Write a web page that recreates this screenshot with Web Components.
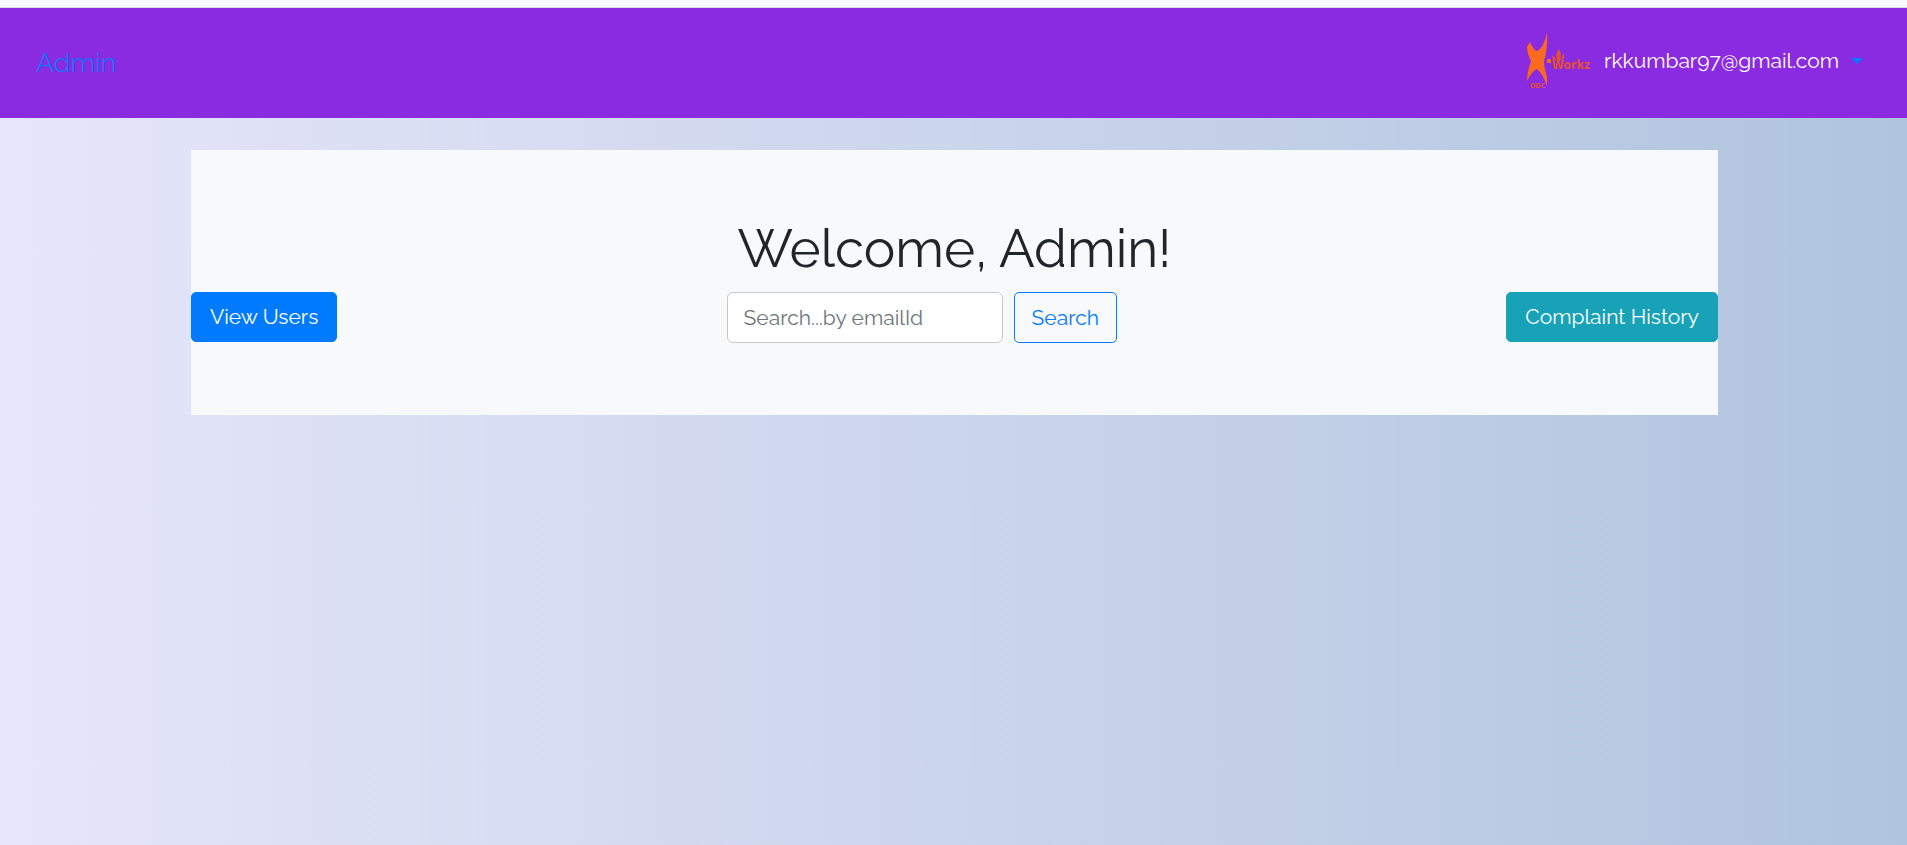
<!DOCTYPE html>
<html lang="en">
<head>
<meta charset="utf-8">
<title>Admin</title>
<style>
html { min-height: 100%; background: linear-gradient(to right, #e6e6fa, #b0c4de); }
body { margin: 0; font-family: Raleway, Lato, sans-serif; font-size: 21px; line-height: 32px; color: #212529; }
</style>
</head>
<body>
<admin-header brand="Admin" email="rkkumbar97@gmail.com"><works-logo></works-logo></admin-header>
<welcome-panel>
  <h1 slot="title">Welcome, Admin!</h1>
  <action-button kind="primary">View Users</action-button>
  <email-search></email-search>
  <action-button kind="info">Complaint History</action-button>
</welcome-panel>
<script>
class BaseElement extends HTMLElement {
  connectedCallback() {
    if (!this.shadowRoot) this.attachShadow({ mode: "open" }).innerHTML = this.render();
  }
}

customElements.define("works-logo", class extends BaseElement {
  render() {
    return `<style>
      :host { display: block; width: 64px; height: 60px; }
      svg { display: block; width: 100%; height: 100%; }
      text { font-family: "Open Sans", sans-serif; font-weight: 700; }
    </style>
    <svg viewBox="0 0 64 60" fill="#f86a20" role="img" aria-label="X-Workz ODC">
      <path d="M1 16 L4 11 Q8 20 11 20 Q18 17 21 1 Q22 18 18 30 Q18 37 21 46 L21 55 Q17 43 11 38 Q6 40 1 50 Q1 42 5 30 Q1 22 1 16Z"/>
      <rect x="21" y="28" width="4" height="4" rx="1"/>
      <g fill="#e8502c"><path d="M26 24 Q30 26 30 30 Q26 29 26 24Z M31 30 Q29 22 33 18 Q36 23 34 30Z M38 22 Q39 28 35 31 Q35 26 38 22Z"/>
      <text x="26" y="38" font-size="12">Workz</text>
      <text x="4" y="57" font-size="7">ODC</text></g>
    </svg>`;
  }
});

customElements.define("admin-header", class extends BaseElement {
  render() {
    return `<style>
      :host { display: block; border-top: 7px solid #f8f9ff; }
      header { display: flex; align-items: center; justify-content: space-between; box-sizing: border-box;
        min-height: 111px; padding: 0 44px 0 36px; background: #8a2be2; border-top: 1px solid #dcdce8; }
      a { color: #007bff; text-decoration: none; font-size: 27px; font-weight: 300; }
      .account { display: flex; align-items: center; gap: 14px; padding-bottom: 4px; }
      button { display: flex; align-items: center; gap: 12px; padding: 0; border: 0; background: none;
        font: inherit; color: #fff; }
      i { border: 6px solid transparent; border-top-color: #007bff; border-bottom: 0; }
    </style>
    <header><a href="#">${this.getAttribute("brand")}</a>
      <div class="account"><slot></slot><button type="button" aria-haspopup="true"><span>${this.getAttribute("email")}</span><i></i></button></div>
    </header>`;
  }
});

customElements.define("action-button", class extends BaseElement {
  render() {
    return `<style>
      :host { display: block; }
      button { box-sizing: border-box; display: block; height: 50px; padding: 0 18px; border: 1px solid #007bff;
        border-radius: 5px; background: #007bff; color: #fff; font: inherit; }
      :host([kind="info"]) button { background: #17a2b8; border-color: #17a2b8; }
      :host([kind="outline"]) button { background: transparent; color: #007bff; height: 51px; padding: 0 17px; }
    </style><button type="button"><slot></slot></button>`;
  }
});

customElements.define("email-search", class extends BaseElement {
  render() {
    return `<style>
      :host { display: block; }
      form { display: flex; gap: 11px; }
      input { box-sizing: border-box; width: 276px; height: 51px; padding: 0 16px; border: 1px solid #c8c8c8;
        border-radius: 6px; background: #fff; font: inherit; color: #495057; }
      input::placeholder { color: #6c757d; opacity: 1; }
    </style>
    <form><input type="search" placeholder="Search...by emailId" aria-label="Search by email id"><action-button kind="outline">Search</action-button></form>`;
  }
});

customElements.define("welcome-panel", class extends BaseElement {
  render() {
    return `<style>
      :host { display: block; margin: 32px 189px 0 191px; padding: 64px 0 72px; background: #f8f9fa; }
      ::slotted(h1) { margin: 0 0 10px; text-align: center; font-size: 53px; line-height: 68px; font-weight: 400; }
      .actions { display: flex; justify-content: space-between; align-items: flex-start; }
    </style>
    <slot name="title"></slot><div class="actions"><slot></slot></div>`;
  }
});
</script>
</body>
</html>
